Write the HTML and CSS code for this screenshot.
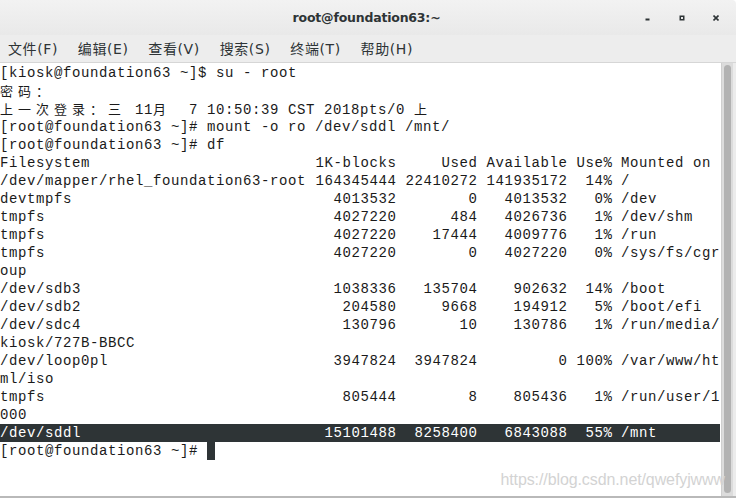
FILE: index.html
```html
<!DOCTYPE html>
<html lang="zh-CN">
<head>
<meta charset="utf-8">
<title>root@foundation63:~</title>
<link rel="stylesheet" href="styles.css">
</head>
<body>
<div class="window">
  <header class="titlebar">
    <div class="tb-side"></div>
    <div class="title">root@foundation63:~</div>
    <div class="tb-side controls">
      <span class="wbtn"><svg width="6" height="6" viewBox="0 0 6 6"><rect x="0.5" y="3.5" width="4" height="2" fill="#2e3436"/></svg></span>
      <span class="wbtn"><svg width="6" height="6" viewBox="0 0 6 6"><rect x="0.5" y="0.5" width="5" height="5" fill="#2e3436"/><rect x="2" y="2" width="2" height="2" fill="#eaeaea"/></svg></span>
      <span class="wbtn"><svg width="6" height="6" viewBox="0 0 6 6"><path d="M0.5 0.5 L5.5 5.5 M5.5 0.5 L0.5 5.5" stroke="#2e3436" stroke-width="1.6"/></svg></span>
    </div>
  </header>
  <nav class="menubar">
    <span class="menu-item">文件(F)</span>
    <span class="menu-item">编辑(E)</span>
    <span class="menu-item">查看(V)</span>
    <span class="menu-item">搜索(S)</span>
    <span class="menu-item">终端(T)</span>
    <span class="menu-item">帮助(H)</span>
  </nav>
  <main class="term">
    <div class="screen">
      <div class="line">[kiosk@foundation63 ~]$ su - root</div>
      <div class="line"><span class="cj">密码：</span></div>
      <div class="line"><span class="cj">上一次登录：三</span> 11<span class="cj">月</span>  7 10:50:39 CST 2018pts/0 <span class="cj">上</span></div>
      <div class="line">[root@foundation63 ~]# mount -o ro /dev/sddl /mnt/</div>
      <div class="line">[root@foundation63 ~]# df</div>
      <div class="df-row"><span>Filesystem</span><span class="num">1K-blocks</span><span class="num">Used</span><span class="num">Available</span><span class="num">Use%</span><span>Mounted on</span></div>
      <div class="df-row"><span>/dev/mapper/rhel_foundation63-root</span><span class="num">164345444</span><span class="num">22410272</span><span class="num">141935172</span><span class="num">14%</span><span>/</span></div>
      <div class="df-row"><span>devtmpfs</span><span class="num">4013532</span><span class="num">0</span><span class="num">4013532</span><span class="num">0%</span><span>/dev</span></div>
      <div class="df-row"><span>tmpfs</span><span class="num">4027220</span><span class="num">484</span><span class="num">4026736</span><span class="num">1%</span><span>/dev/shm</span></div>
      <div class="df-row"><span>tmpfs</span><span class="num">4027220</span><span class="num">17444</span><span class="num">4009776</span><span class="num">1%</span><span>/run</span></div>
      <div class="df-row"><span>tmpfs</span><span class="num">4027220</span><span class="num">0</span><span class="num">4027220</span><span class="num">0%</span><span>/sys/fs/cgr</span></div>
      <div class="line">oup</div>
      <div class="df-row"><span>/dev/sdb3</span><span class="num">1038336</span><span class="num">135704</span><span class="num">902632</span><span class="num">14%</span><span>/boot</span></div>
      <div class="df-row"><span>/dev/sdb2</span><span class="num">204580</span><span class="num">9668</span><span class="num">194912</span><span class="num">5%</span><span>/boot/efi</span></div>
      <div class="df-row"><span>/dev/sdc4</span><span class="num">130796</span><span class="num">10</span><span class="num">130786</span><span class="num">1%</span><span>/run/media/</span></div>
      <div class="line">kiosk/727B-BBCC</div>
      <div class="df-row"><span>/dev/loop0pl</span><span class="num">3947824</span><span class="num">3947824</span><span class="num">0</span><span class="num">100%</span><span>/var/www/ht</span></div>
      <div class="line">ml/iso</div>
      <div class="df-row"><span>tmpfs</span><span class="num">805444</span><span class="num">8</span><span class="num">805436</span><span class="num">1%</span><span>/run/user/1</span></div>
      <div class="line">000</div>
      <div class="df-row selected"><span>/dev/sddl</span><span class="num">15101488</span><span class="num">8258400</span><span class="num">6843088</span><span class="num">55%</span><span>/mnt</span></div>
      <div class="line">[root@foundation63 ~]# <span class="cursor"></span></div>
    </div>
    <div class="scrollbar"><div class="thumb"></div></div>
    <div class="edge"></div>
    <div class="watermark">https://blog.csdn.net/qwefyjwww</div>
  </main>
</div>
</body>
</html>
```

FILE: styles.css
```css
* { box-sizing: border-box; }
html, body {
  margin: 0;
  padding: 0;
  width: 736px;
  height: 498px;
  overflow: hidden;
  background: #ffffff;
}
.window {
  width: 736px;
  height: 498px;
  display: flex;
  flex-direction: column;
  border-bottom: 2px solid #b9b9b9;
}
.titlebar {
  height: 35px;
  flex: none;
  display: grid;
  grid-template-columns: 1fr auto 1fr;
  align-items: center;
  background: linear-gradient(#f2f2f2, #e9e9e9);
  border-top-right-radius: 4px;
  padding-right: 3px;
}
.title {
  font-family: "DejaVu Sans", sans-serif;
  font-weight: bold;
  font-size: 12.5px;
  color: #2e3436;
  letter-spacing: -0.2px;
}
.controls {
  display: flex;
  justify-content: flex-end;
}
.wbtn {
  width: 34px;
  height: 34px;
  display: flex;
  align-items: center;
  justify-content: center;
}
.wbtn svg { display: block; }
.menubar {
  height: 28px;
  flex: none;
  display: flex;
  align-items: center;
  gap: 19.8px;
  padding: 0 0 1px 8px;
  background: #ededed;
  border-bottom: 1px solid #d6d6d6;
}
.menu-item {
  font-family: "DejaVu Sans", "Noto Sans CJK SC", sans-serif;
  font-size: 14px;
  letter-spacing: 0.6px;
  color: #2e3436;
}
.term {
  flex: 1;
  display: flex;
  position: relative;
  min-height: 0;
}
.screen {
  flex: none;
  width: 721px;
  padding-top: 1px;
  font-family: "Liberation Mono", "Noto Sans CJK SC", monospace;
  font-size: 14px;
  letter-spacing: 0.6px;
  line-height: 18px;
  color: #1a1a1a;
}
.line { height: 18px; white-space: pre; }
.cj {
  font-family: "Noto Sans CJK SC", sans-serif;
  font-size: 13px;
  letter-spacing: 5px;
}
.df-row {
  height: 18px;
  display: grid;
  grid-template-columns: 306px 81px 72px 81px 36px 1fr;
  column-gap: 9px;
  width: 720px;
  white-space: pre;
}
.num { text-align: right; margin-right: -0.6px; }
.selected {
  background: #2e3436;
  color: #ffffff;
}
.cursor {
  display: inline-block;
  width: 8px;
  height: 18px;
  vertical-align: top;
  background: #2e3436;
}
.scrollbar {
  flex: none;
  width: 12px;
  background: #dcdcdc;
  border-left: 1px solid #cfcfcf;
  padding: 2px 1px 3px 2px;
}
.thumb {
  height: 100%;
  width: 7px;
  border-radius: 4px;
  background: #b2b2b2;
}
.edge {
  flex: none;
  width: 3px;
  background: #ececec;
}
.watermark {
  position: absolute;
  right: 11px;
  bottom: 7px;
  font-family: "Liberation Sans", Arial, sans-serif;
  font-size: 16px;
  letter-spacing: -0.1px;
  color: #d3d3d3;
}
```
